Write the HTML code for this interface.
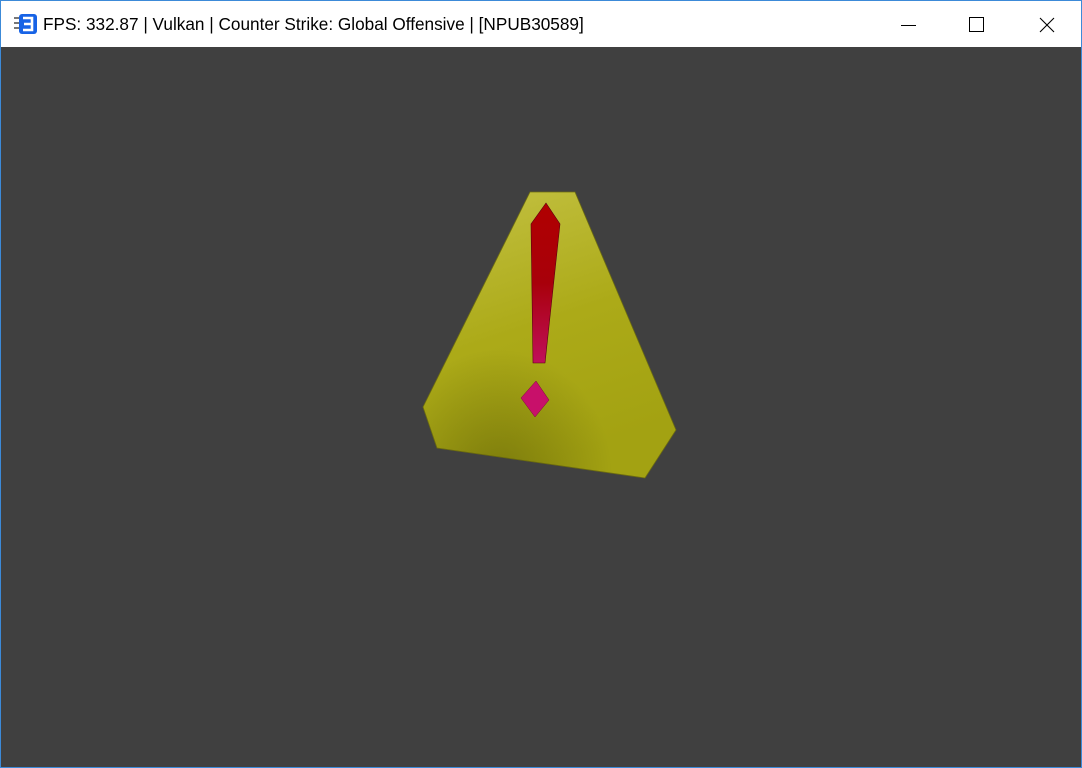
<!DOCTYPE html>
<html><head><style>
html,body{margin:0;padding:0;width:1082px;height:768px;overflow:hidden;background:#fff;font-family:"Liberation Sans",sans-serif}
.win{position:absolute;left:0;top:0;width:1080px;height:766px;border:1px solid #3c8ad8;background:#404040}
.tb{position:absolute;left:0;top:0;width:1080px;height:46px;background:#fff}
.title{position:absolute;left:42px;top:13px;font-size:17.2px;color:#000}
</style></head><body>
<div class="win">
<div class="tb">
<svg style="position:absolute;left:13px;top:13px" width="24" height="20" viewBox="0 0 24 20">
<rect x="0" y="1" width="5" height="18" fill="#fff"/>
<rect x="0" y="3" width="5" height="2" fill="#777"/><rect x="0" y="8" width="5" height="2" fill="#777"/><rect x="0" y="13" width="5" height="2" fill="#777"/>
<rect x="5" y="0" width="18" height="20" rx="3" fill="#1763e6"/>
<path d="M9 4h9v12h-9M10 10h8" stroke="#fff" stroke-width="2.6" fill="none"/>
</svg>
<div class="title">FPS: 332.87 | Vulkan | Counter Strike: Global Offensive | [NPUB30589]</div>
<svg style="position:absolute;left:900px;top:16px" width="160" height="16" viewBox="0 0 160 16">
<path d="M0 8.5h15" stroke="#000" stroke-width="1"/>
<rect x="68.5" y="0.5" width="14" height="14" fill="none" stroke="#000"/>
<path d="M139 1l14 14M153 1l-14 14" stroke="#000" stroke-width="1.1"/>
</svg>
</div>
<svg style="position:absolute;left:0;top:0" width="1080" height="766" viewBox="1 1 1080 766">
<defs>
<linearGradient id="y" x1="0" y1="0" x2="0.3" y2="1">
<stop offset="0" stop-color="#c4c244"/><stop offset="0.55" stop-color="#acaa18"/><stop offset="1" stop-color="#a3a212"/>
</linearGradient>
<radialGradient id="sh" cx="0.3" cy="1" r="0.45">
<stop offset="0" stop-color="#5a5a06" stop-opacity="0.55"/><stop offset="1" stop-color="#5a5a06" stop-opacity="0"/>
</radialGradient>
<linearGradient id="r" x1="0" y1="0" x2="0" y2="1">
<stop offset="0" stop-color="#b00000"/><stop offset="0.5" stop-color="#a8000a"/><stop offset="1" stop-color="#c0105a"/>
</linearGradient>
</defs>
<polygon points="530,192 575,192 676,430 645,478 437,448 423,407" fill="url(#y)" stroke="#6d6c10" stroke-width="0.8"/>
<polygon points="530,192 575,192 676,430 645,478 437,448 423,407" fill="url(#sh)"/>
<polygon points="546,203 560,224 545,363 533,363 531,224" fill="url(#r)" stroke="#5a0010" stroke-width="0.6"/>
<polygon points="536,381 549,400 535,417 521,398" fill="#c8106a" stroke="#7a0a3a" stroke-width="0.5"/>
</svg>
</div>
</body></html>
